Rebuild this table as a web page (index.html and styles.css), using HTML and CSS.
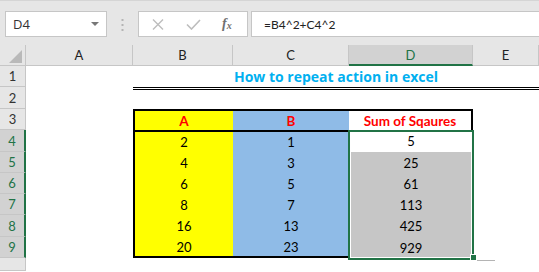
FILE: index.html
```html
<!DOCTYPE html>
<html lang="en">
<head>
    <meta charset="UTF-8">
    <title>How to repeat action in excel</title>
    <link rel="stylesheet" href="styles.css">
</head>
<body>
    <div class="toolbar">
        <div class="namebox">
            <span>D4</span>
            <svg class="caret" width="8" height="5" viewBox="0 0 8 5"><path d="M0 0h8L4 4z" fill="#777"/></svg>
        </div>
        <svg class="grip" width="3" height="13" viewBox="0 0 3 13">
            <rect x="0.5" y="0" width="2" height="2" fill="#b4b4b4"/>
            <rect x="0.5" y="5" width="2" height="2" fill="#b4b4b4"/>
            <rect x="0.5" y="10" width="2" height="2" fill="#b4b4b4"/>
        </svg>
        <div class="fx-buttons">
            <svg width="12" height="11" viewBox="0 0 12 11"><path d="M1 0.5l10 10M11 0.5l-10 10" stroke="#bdbdbd" stroke-width="1.4"/></svg>
            <svg width="15" height="11" viewBox="0 0 15 11"><path d="M1 5.5l4.5 4.5L14 1" stroke="#bdbdbd" stroke-width="1.6" fill="none"/></svg>
            <span class="fx">f<sub>x</sub></span>
        </div>
        <div class="formula">=B4^2+C4^2</div>
    </div>

    <div class="sheet">
        <!-- column headers -->
        <div class="corner"><svg width="13" height="13" viewBox="0 0 13 13"><path d="M13 0v13H0z" fill="#b9b9b9"/></svg></div>
        <div class="col-head">A</div>
        <div class="col-head">B</div>
        <div class="col-head">C</div>
        <div class="col-head active">D</div>
        <div class="col-head">E</div>

        <!-- row 1 -->
        <div class="row-head">1</div>
        <div class="cell"></div>
        <div class="cell title">How to repeat action in excel</div>

        <!-- row 2 -->
        <div class="row-head">2</div>
        <div class="cell"></div>
        <div class="cell double"></div>
        <div class="cell double"></div>
        <div class="cell double"></div>
        <div class="cell double"></div>

        <!-- row 3 -->
        <div class="row-head">3</div>
        <div class="cell"></div>
        <div class="cell yellow head left-edge top-edge">A</div>
        <div class="cell blue head top-edge">B</div>
        <div class="cell head top-edge right-edge">Sum of Sqaures</div>
        <div class="cell"></div>

        <!-- row 4 -->
        <div class="row-head active">4</div>
        <div class="cell"></div>
        <div class="cell yellow left-edge top-edge">2</div>
        <div class="cell blue top-edge">1</div>
        <div class="cell">5</div>
        <div class="cell"></div>

        <div class="row-head active">5</div>
        <div class="cell"></div>
        <div class="cell yellow left-edge">4</div>
        <div class="cell blue">3</div>
        <div class="cell sel">25</div>
        <div class="cell"></div>

        <div class="row-head active">6</div>
        <div class="cell"></div>
        <div class="cell yellow left-edge">6</div>
        <div class="cell blue">5</div>
        <div class="cell sel">61</div>
        <div class="cell"></div>

        <div class="row-head active">7</div>
        <div class="cell"></div>
        <div class="cell yellow left-edge">8</div>
        <div class="cell blue">7</div>
        <div class="cell sel">113</div>
        <div class="cell"></div>

        <div class="row-head active">8</div>
        <div class="cell"></div>
        <div class="cell yellow left-edge">16</div>
        <div class="cell blue">13</div>
        <div class="cell sel">425</div>
        <div class="cell"></div>

        <div class="row-head active">9</div>
        <div class="cell"></div>
        <div class="cell yellow left-edge bottom-edge">20</div>
        <div class="cell blue bottom-edge">23</div>
        <div class="cell sel">929</div>
        <div class="cell"></div>

        <!-- row 10, cut off -->
        <div class="row-head"></div>
        <div class="cell"></div>
        <div class="cell"></div>
        <div class="cell"></div>
        <div class="cell"></div>
        <div class="cell"></div>

        <!-- selection D4:D9 -->
        <div class="selection"></div>
        <div class="fill-handle"></div>
        <div class="quick-analysis"></div>
    </div>
</body>
</html>
```

FILE: styles.css
```css
html, body {
    margin: 0;
    padding: 0;
    width: 539px;
    height: 272px;
    overflow: hidden;
    background: #fff;
    font-family: Lato, "Open Sans", sans-serif;
}
.toolbar {
    height: 45px;
    border-top: 1px solid #d5d5d5;
    background: #e6e6e6;
    display: flex;
    align-items: flex-start;
    padding-top: 10px;
    box-sizing: border-box;
}
.namebox {
    margin-left: 5px;
    width: 102px;
    height: 26px;
    box-sizing: border-box;
    background: #fff;
    border: 1px solid #c6c6c6;
    display: flex;
    align-items: center;
    justify-content: space-between;
    padding: 0 7px 0 7px;
    font-family: "Open Sans", sans-serif;
    font-size: 13px;
    color: #333;
}
.caret {
    margin-top: 1px;
}
.grip {
    margin: 8px 0 0 14px;
}
.fx-buttons {
    margin-left: 14px;
    width: 110px;
    height: 26px;
    box-sizing: border-box;
    background: #fff;
    border: 1px solid #c6c6c6;
    display: flex;
    align-items: center;
    padding-left: 13px;
    gap: 22px;
}
.fx {
    font-family: "Liberation Serif", serif;
    font-style: italic;
    font-weight: bold;
    font-size: 14px;
    color: #707070;
    margin-left: -1px;
}
.fx sub {
    font-size: 10px;
    vertical-align: -1px;
}
.formula {
    margin-left: 3px;
    flex: 1;
    height: 26px;
    box-sizing: border-box;
    background: #fff;
    border: 1px solid #c6c6c6;
    border-right: none;
    padding-left: 12px;
    display: flex;
    align-items: center;
    font-size: 12px;
    color: #222;
}

.sheet {
    position: relative;
    display: grid;
    grid-template-columns: 26px 107px 100px 116px 124px 66px;
    grid-template-rows: 21px 21px 22px 21px 22px 21px 21px 21px 22px 21px 13px;
    background: #e6e6e6;
    font-size: 13px;
}
.corner {
    display: flex;
    align-items: flex-end;
    justify-content: flex-end;
    padding: 0 3px 2px 0;
    border-right: 1px solid #c6c6c6;
    border-bottom: 1px solid #c6c6c6;
}
.col-head {
    display: flex;
    align-items: center;
    justify-content: center;
    border-right: 1px solid #c6c6c6;
    border-bottom: 1px solid #c6c6c6;
    color: #222;
}
.col-head.active {
    background: #d2d2d2;
    color: #217346;
    border-bottom: 2px solid #217346;
}
.row-head {
    display: flex;
    align-items: center;
    justify-content: center;
    border-right: 1px solid #c6c6c6;
    border-bottom: 1px solid #c6c6c6;
    color: #333;
}
.row-head.active {
    background: #d2d2d2;
    color: #217346;
    border-right: 2px solid #217346;
}
.cell {
    background: #fff;
    display: flex;
    align-items: center;
    justify-content: center;
    color: #000;
    white-space: nowrap;
}
.title {
    grid-column: 3 / 7;
    font-family: "Open Sans", sans-serif;
    font-size: 14px;
    color: #00b0f0;
    font-weight: bold;
    padding-bottom: 1px;
}
.double {
    border-top: 3px double #000;
}
.yellow {
    background: #ffff00;
}
.blue {
    background: #8fbbe7;
}
.head {
    color: #ff0000;
    font-weight: bold;
    font-size: 13.5px;
}
.top-edge {
    border-top: 2px solid #000;
}
.left-edge {
    border-left: 2px solid #000;
}
.right-edge {
    border-right: 2px solid #000;
}
.bottom-edge {
    border-bottom: 2px solid #000;
}
.sel {
    background: #c6c6c6;
}
.selection {
    position: absolute;
    left: 348px;
    top: 85px;
    width: 126px;
    height: 130px;
    box-sizing: border-box;
    border: 2px solid #217346;
    box-shadow: inset 0 0 0 1px #fff;
    pointer-events: none;
}
.fill-handle {
    position: absolute;
    left: 471px;
    top: 210px;
    width: 5px;
    height: 5px;
    background: #217346;
    outline: 1px solid #fff;
}
.quick-analysis {
    position: absolute;
    left: 477px;
    top: 215px;
    width: 18px;
    height: 1px;
    background: #b4b4b4;
}
```
